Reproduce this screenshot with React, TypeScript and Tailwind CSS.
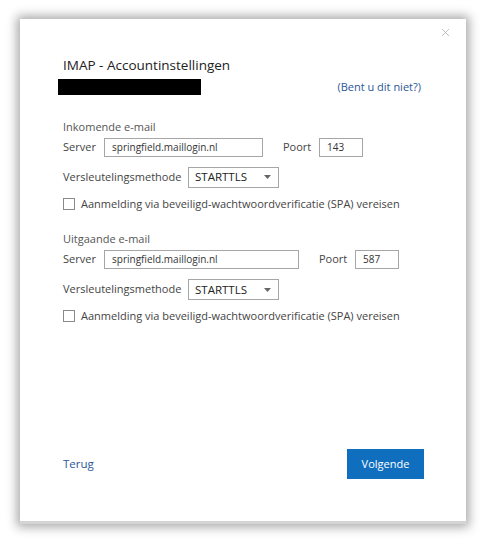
import { X } from "lucide-react";

const font = { fontFamily: '"Open Sans", "Noto Sans", Arial, sans-serif' };

const TextField = ({ value, width }: { value: string; width: string }) => (
  <div
    className={`${width} h-[19px] border border-[#a6a6a6] bg-white flex items-center pl-[7px] text-[10px] text-[#333]`}
  >
    {value}
  </div>
);

const EncryptionSelect = () => (
  <div className="w-[91px] h-[21px] border border-[#a6a6a6] bg-white flex items-center justify-between pl-[6px] pr-[6px] text-[11.5px] text-[#222]">
    <span>STARTTLS</span>
    <svg width="7" height="4" viewBox="0 0 7 4" className="mr-[1px]">
      <path d="M0 0 L7 0 L3.5 4 Z" fill="#666" />
    </svg>
  </div>
);

const SpaCheckbox = () => (
  <label className="flex items-center gap-[6px] text-[11px] text-[#444]">
    <span className="w-[12px] h-[12px] border border-[#8a8a8a] bg-white" />
    Aanmelding via beveiligd-wachtwoordverificatie (SPA) vereisen
  </label>
);

const MailSection = ({
  title,
  serverWidth,
  port,
}: {
  title: string;
  serverWidth: string;
  port: string;
}) => (
  <div className="flex flex-col">
    <div className="text-[11px] text-[#555] leading-[16px]">{title}</div>
    <div className="flex items-center mt-[3px] text-[11px] text-[#444]">
      <span className="w-[41px]">Server</span>
      <TextField value="springfield.maillogin.nl" width={serverWidth} />
      <span className="ml-[20px] w-[36px]">Poort</span>
      <TextField value={port} width="w-[44px]" />
    </div>
    <div className="flex items-center mt-[10px] text-[11px] text-[#444]">
      <span className="w-[125px]">Versleutelingsmethode</span>
      <EncryptionSelect />
    </div>
    <div className="mt-[8px]">
      <SpaCheckbox />
    </div>
  </div>
);

export default function App() {
  return (
    <div className="w-[486px] h-[548px] bg-white pt-[19px] pl-[20px]" style={font}>
      <div className="relative w-[446px] h-[505px] bg-white border-b-[3px] border-[#d4d4d4] shadow-[0_0_10px_3px_rgba(0,0,0,0.35)] flex flex-col pl-[43px] pr-[45px]">
        <button className="absolute top-[7px] right-[14px] text-[#a0a0a0]">
          <X size={13} strokeWidth={1.2} />
        </button>

        <h1 className="mt-[37px] text-[13.5px] leading-[18px] text-[#222]">
          IMAP - Accountinstellingen
        </h1>
        <div className="flex items-center justify-between mt-[5px]">
          <div className="w-[143px] h-[16px] bg-black -ml-[5px]" />
          <a className="text-[11px] text-[#2b5797]">(Bent u dit niet?)</a>
        </div>

        <div className="mt-[23px]">
          <MailSection
            title="Inkomende e-mail"
            serverWidth="w-[159px]"
            port="143"
          />
        </div>

        <div className="mt-[19px]">
          <MailSection
            title="Uitgaande e-mail"
            serverWidth="w-[195px]"
            port="587"
          />
        </div>

        <div className="mt-auto mb-[42px] flex items-center justify-between">
          <a className="text-[11.5px] text-[#2b5797]">Terug</a>
          <button className="w-[77px] h-[30px] bg-[#106ebe] text-white text-[11px] -mr-[3px]">
            Volgende
          </button>
        </div>
      </div>
    </div>
  );
}
